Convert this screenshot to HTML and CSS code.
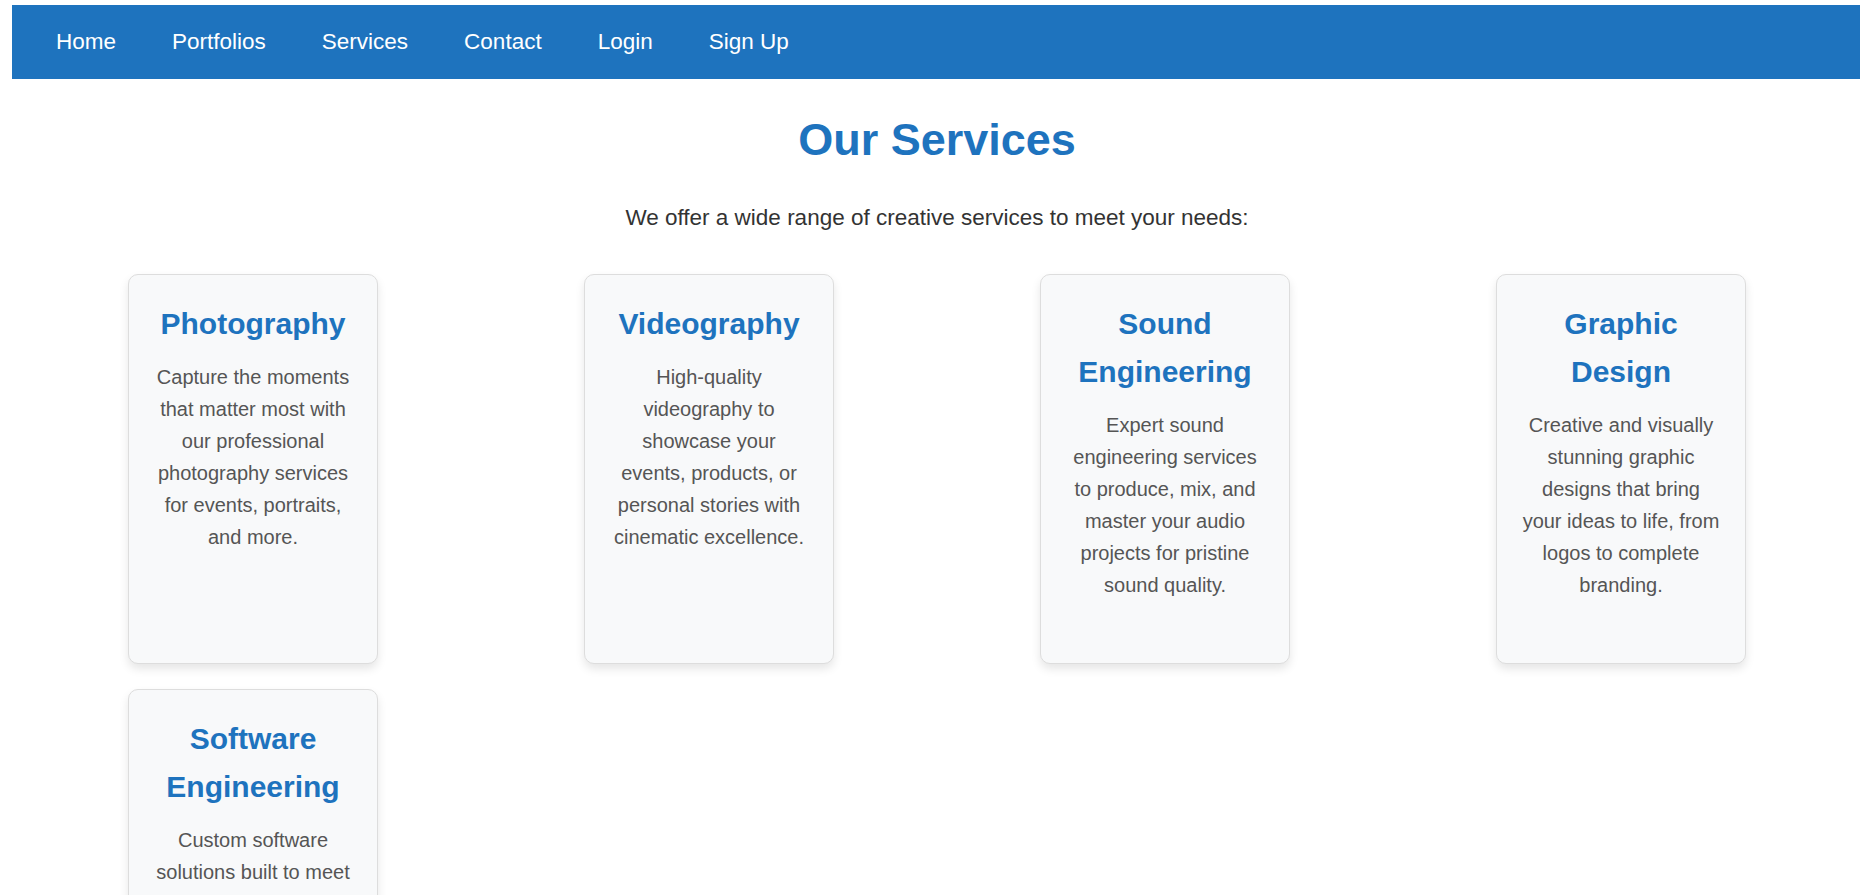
FILE: index.html
```html
<!DOCTYPE html>
<html lang="en">
<head>
<meta charset="utf-8">
<title>Our Services</title>
<link rel="stylesheet" href="styles.css">
</head>
<body>
<nav class="topnav">
  <a href="#">Home</a>
  <a href="#">Portfolios</a>
  <a href="#">Services</a>
  <a href="#">Contact</a>
  <a href="#">Login</a>
  <a href="#">Sign Up</a>
</nav>
<main class="page">
  <h1 class="page-title">Our Services</h1>
  <p class="intro">We offer a wide range of creative services to meet your needs:</p>
  <section class="services">
    <div class="card">
      <h3>Photography</h3>
      <p>Capture the moments that matter most with our professional photography services for events, portraits, and more.</p>
    </div>
    <div class="card">
      <h3>Videography</h3>
      <p>High-quality videography to showcase your events, products, or personal stories with cinematic excellence.</p>
    </div>
    <div class="card">
      <h3>Sound Engineering</h3>
      <p>Expert sound engineering services to produce, mix, and master your audio projects for pristine sound quality.</p>
    </div>
    <div class="card">
      <h3>Graphic Design</h3>
      <p>Creative and visually stunning graphic designs that bring your ideas to life, from logos to complete branding.</p>
    </div>
    <div class="card">
      <h3>Software Engineering</h3>
      <p>Custom software solutions built to meet your unique business needs, from web apps to enterprise systems.</p>
    </div>
  </section>
</main>
</body>
</html>
```
FILE: styles.css
```css
html, body {
  background: #ffffff;
}
body {
  margin: 5px 16px 0 12px;
  font-family: "Liberation Sans", Arial, sans-serif;
  line-height: 1.6;
  color: #333333;
}
.topnav {
  display: flex;
  align-items: center;
  height: 74px;
  padding-left: 16px;
  background: #1e73be;
}
.topnav a {
  padding: 0 28px;
  color: #ffffff;
  text-decoration: none;
  font-size: 22.5px;
  line-height: 36px;
}
.page {
  padding: 0 114px 0 116px;
}
.page-title {
  margin: 25px 0 0;
  text-align: center;
  font-size: 45px;
  line-height: 72px;
  font-weight: bold;
  color: #1e73be;
}
.intro {
  margin: 24px 0 38px;
  text-align: center;
  font-size: 22.5px;
  line-height: 36px;
  color: #333333;
}
.services {
  display: grid;
  grid-template-columns: repeat(4, 250px);
  justify-content: space-between;
  row-gap: 25px;
}
.card {
  box-sizing: border-box;
  min-height: 390px;
  padding: 25px;
  background: #f8f9fa;
  border: 1px solid #dddddd;
  border-radius: 10px;
  box-shadow: 0 5px 10px rgba(0, 0, 0, 0.1);
  text-align: center;
}
.card h3 {
  margin: 0 0 13px;
  font-size: 30px;
  line-height: 48px;
  color: #1e73be;
}
.card p {
  margin: 0;
  font-size: 20px;
  line-height: 32px;
  color: #555555;
}
```
